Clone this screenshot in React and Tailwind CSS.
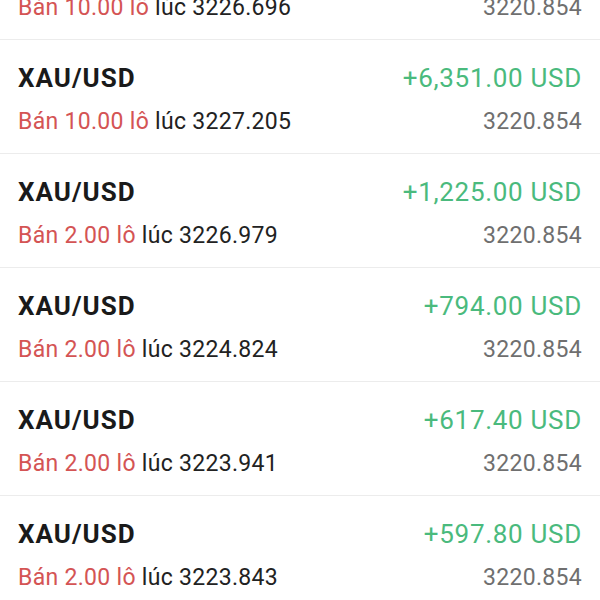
const trades = [
  { lots: "10.00", open: "3226.696", profit: "+6,120.00 USD", current: "3220.854" },
  { lots: "10.00", open: "3227.205", profit: "+6,351.00 USD", current: "3220.854" },
  { lots: "2.00", open: "3226.979", profit: "+1,225.00 USD", current: "3220.854" },
  { lots: "2.00", open: "3224.824", profit: "+794.00 USD", current: "3220.854" },
  { lots: "2.00", open: "3223.941", profit: "+617.40 USD", current: "3220.854" },
  { lots: "2.00", open: "3223.843", profit: "+597.80 USD", current: "3220.854" },
];

const TradeRow = ({ trade }) => (
  <div className="border-b border-[#ececec] px-[18px] pt-[23px] pb-[17px]">
    <div className="flex items-center justify-between h-[30px]">
      <span className="text-[26px] font-bold tracking-[1px] text-[#1a1a1a]">XAU/USD</span>
      <span className="text-[26px] tracking-[0.7px] text-[#4aba7d]">{trade.profit}</span>
    </div>
    <div className="flex items-center justify-between h-[28px] mt-[15px] text-[23px] tracking-[0.3px]">
      <span>
        <span className="text-[#d45454]">Bán {trade.lots} lô</span>{" "}
        <span className="text-[#222]">lúc {trade.open}</span>
      </span>
      <span className="text-[#6f6f6f]">{trade.current}</span>
    </div>
  </div>
);

export default function App() {
  return (
    <div
      className="w-[600px] h-[600px] overflow-hidden bg-white"
      style={{ fontFamily: "Roboto, 'Liberation Sans', sans-serif" }}
    >
      <div className="-mt-[74px]">
        {trades.map((trade, index) => (
          <TradeRow key={index} trade={trade} />
        ))}
      </div>
    </div>
  );
}
